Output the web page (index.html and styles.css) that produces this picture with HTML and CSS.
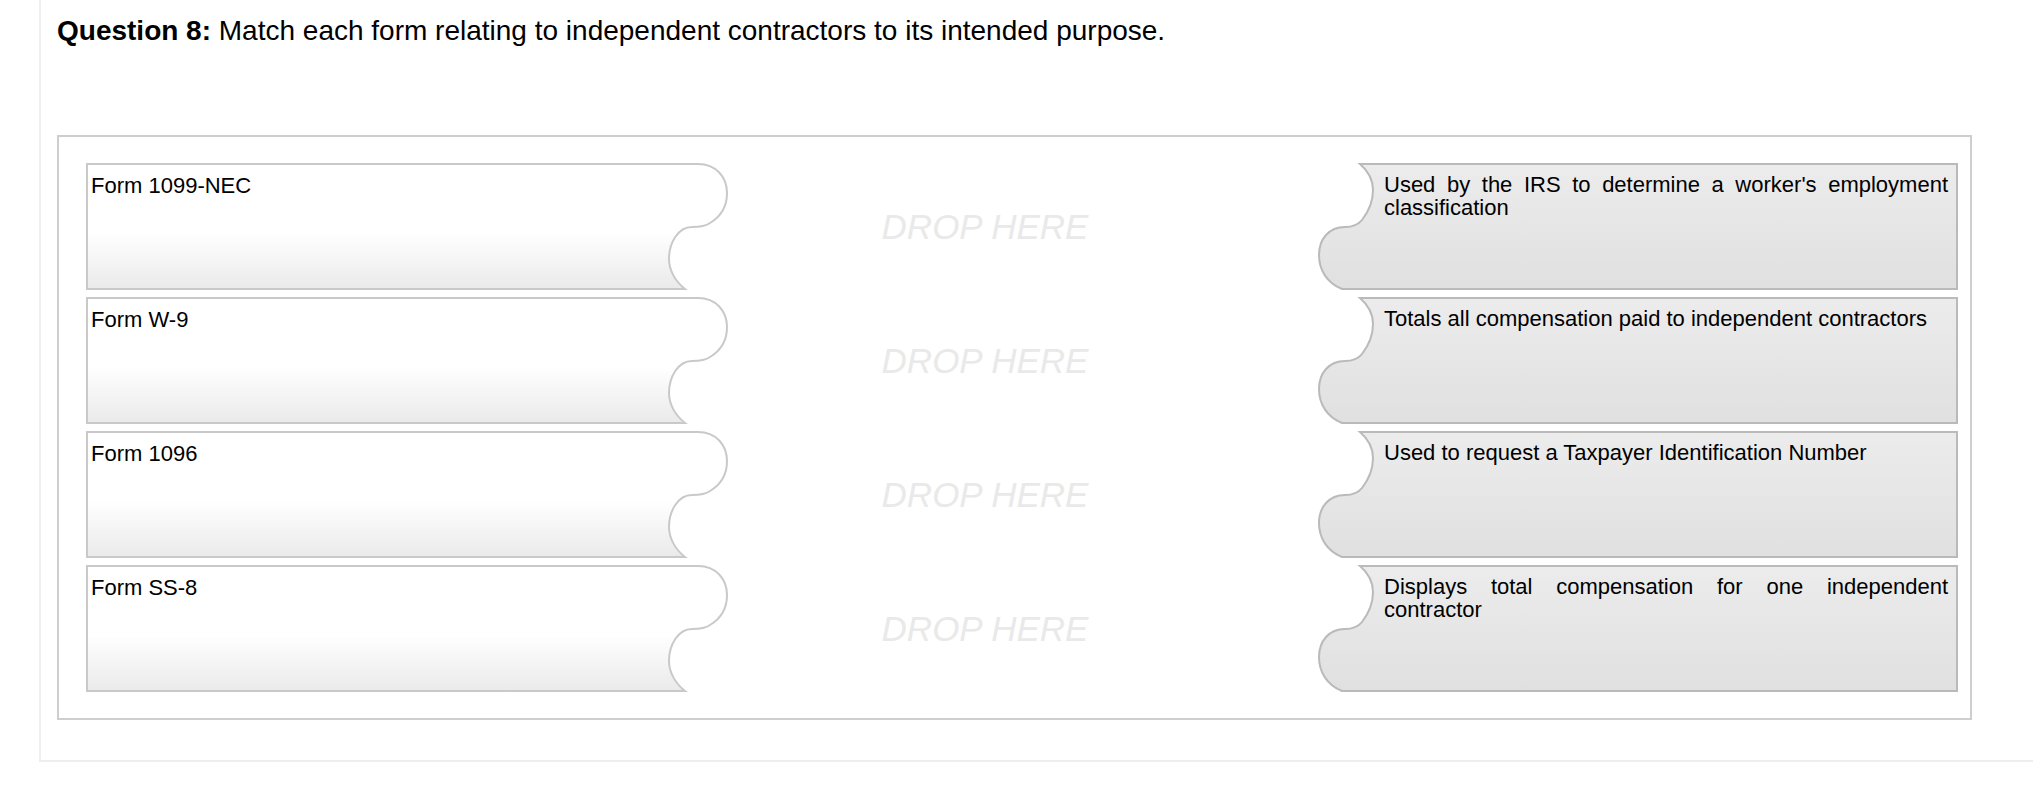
FILE: index.html
```html
<!DOCTYPE html>
<html>
  <head>
    <title>Question 8</title>
    <link rel="stylesheet" href="styles.css">
  </head>
  <body>
    <div class="page">
      <div class="question"><b>Question 8:</b> Match each form relating to independent contractors to its intended purpose.</div>

      <div class="match-panel">
        <div class="match-row">
          <div class="card card-left">
            <svg class="card-shape" width="642" height="128" viewBox="0 0 642 128">
              <defs>
                <linearGradient id="lg1" x1="0" y1="0" x2="0" y2="1">
                  <stop offset="0" stop-color="#fff"/>
                  <stop offset="0.55" stop-color="#fff"/>
                  <stop offset="1" stop-color="#eaeaea"/>
                </linearGradient>
              </defs>
              <path d="M1,1 H612 C630,1 641,14 641,30 C641,44 634,54 624,60 C620,63 614,64 606,64 C592,64 583,80 583,96 C583,108 590,119 599,126 H1 Z" fill="url(#lg1)" stroke="#c9c9c9" stroke-width="2"/>
            </svg>
            <div class="card-text">Form 1099-NEC</div>
          </div>
          <div class="drop-zone">DROP HERE</div>
          <div class="card card-right">
            <svg class="card-shape" width="642" height="128" viewBox="0 0 642 128">
              <defs>
                <linearGradient id="rg1" x1="0" y1="0" x2="0" y2="1">
                  <stop offset="0" stop-color="#ececec"/>
                  <stop offset="1" stop-color="#e0e0e0"/>
                </linearGradient>
              </defs>
              <path d="M43,1 H640 V126 H25 C10,120 2,107 2,92 C2,76 12,64 28,64 C36,64 41,62 45,57 C52,48 56,38 56,27 C56,16 50,7 43,1 Z" fill="url(#rg1)" stroke="#bababa" stroke-width="2"/>
            </svg>
            <div class="card-text">Used by the IRS to determine a worker's employment classification</div>
          </div>
        </div>

        <div class="match-row">
          <div class="card card-left">
            <svg class="card-shape" width="642" height="128" viewBox="0 0 642 128">
              <defs>
                <linearGradient id="lg2" x1="0" y1="0" x2="0" y2="1">
                  <stop offset="0" stop-color="#fff"/>
                  <stop offset="0.55" stop-color="#fff"/>
                  <stop offset="1" stop-color="#eaeaea"/>
                </linearGradient>
              </defs>
              <path d="M1,1 H612 C630,1 641,14 641,30 C641,44 634,54 624,60 C620,63 614,64 606,64 C592,64 583,80 583,96 C583,108 590,119 599,126 H1 Z" fill="url(#lg2)" stroke="#c9c9c9" stroke-width="2"/>
            </svg>
            <div class="card-text">Form W-9</div>
          </div>
          <div class="drop-zone">DROP HERE</div>
          <div class="card card-right">
            <svg class="card-shape" width="642" height="128" viewBox="0 0 642 128">
              <defs>
                <linearGradient id="rg2" x1="0" y1="0" x2="0" y2="1">
                  <stop offset="0" stop-color="#ececec"/>
                  <stop offset="1" stop-color="#e0e0e0"/>
                </linearGradient>
              </defs>
              <path d="M43,1 H640 V126 H25 C10,120 2,107 2,92 C2,76 12,64 28,64 C36,64 41,62 45,57 C52,48 56,38 56,27 C56,16 50,7 43,1 Z" fill="url(#rg2)" stroke="#bababa" stroke-width="2"/>
            </svg>
            <div class="card-text">Totals all compensation paid to independent contractors</div>
          </div>
        </div>

        <div class="match-row">
          <div class="card card-left">
            <svg class="card-shape" width="642" height="128" viewBox="0 0 642 128">
              <defs>
                <linearGradient id="lg3" x1="0" y1="0" x2="0" y2="1">
                  <stop offset="0" stop-color="#fff"/>
                  <stop offset="0.55" stop-color="#fff"/>
                  <stop offset="1" stop-color="#eaeaea"/>
                </linearGradient>
              </defs>
              <path d="M1,1 H612 C630,1 641,14 641,30 C641,44 634,54 624,60 C620,63 614,64 606,64 C592,64 583,80 583,96 C583,108 590,119 599,126 H1 Z" fill="url(#lg3)" stroke="#c9c9c9" stroke-width="2"/>
            </svg>
            <div class="card-text">Form 1096</div>
          </div>
          <div class="drop-zone">DROP HERE</div>
          <div class="card card-right">
            <svg class="card-shape" width="642" height="128" viewBox="0 0 642 128">
              <defs>
                <linearGradient id="rg3" x1="0" y1="0" x2="0" y2="1">
                  <stop offset="0" stop-color="#ececec"/>
                  <stop offset="1" stop-color="#e0e0e0"/>
                </linearGradient>
              </defs>
              <path d="M43,1 H640 V126 H25 C10,120 2,107 2,92 C2,76 12,64 28,64 C36,64 41,62 45,57 C52,48 56,38 56,27 C56,16 50,7 43,1 Z" fill="url(#rg3)" stroke="#bababa" stroke-width="2"/>
            </svg>
            <div class="card-text">Used to request a Taxpayer Identification Number</div>
          </div>
        </div>

        <div class="match-row">
          <div class="card card-left">
            <svg class="card-shape" width="642" height="128" viewBox="0 0 642 128">
              <defs>
                <linearGradient id="lg4" x1="0" y1="0" x2="0" y2="1">
                  <stop offset="0" stop-color="#fff"/>
                  <stop offset="0.55" stop-color="#fff"/>
                  <stop offset="1" stop-color="#eaeaea"/>
                </linearGradient>
              </defs>
              <path d="M1,1 H612 C630,1 641,14 641,30 C641,44 634,54 624,60 C620,63 614,64 606,64 C592,64 583,80 583,96 C583,108 590,119 599,126 H1 Z" fill="url(#lg4)" stroke="#c9c9c9" stroke-width="2"/>
            </svg>
            <div class="card-text">Form SS-8</div>
          </div>
          <div class="drop-zone">DROP HERE</div>
          <div class="card card-right">
            <svg class="card-shape" width="642" height="128" viewBox="0 0 642 128">
              <defs>
                <linearGradient id="rg4" x1="0" y1="0" x2="0" y2="1">
                  <stop offset="0" stop-color="#ececec"/>
                  <stop offset="1" stop-color="#e0e0e0"/>
                </linearGradient>
              </defs>
              <path d="M43,1 H640 V126 H25 C10,120 2,107 2,92 C2,76 12,64 28,64 C36,64 41,62 45,57 C52,48 56,38 56,27 C56,16 50,7 43,1 Z" fill="url(#rg4)" stroke="#bababa" stroke-width="2"/>
            </svg>
            <div class="card-text">Displays total compensation for one independent contractor</div>
          </div>
        </div>
      </div>
    </div>
  </body>
</html>
```

FILE: styles.css
```css
body {
  background: #fff;
  color: #000;
  font-family: 'Liberation Sans', Arial, sans-serif;
  margin: 0;
}

.page {
  border-bottom: 2px solid #eee;
  border-left: 2px solid #eee;
  margin-left: 39px;
  padding: 15px 0 40px 16px;
}

.question {
  font-size: 28px;
  line-height: 32px;
}

.match-panel {
  border: 2px solid #cecece;
  box-sizing: border-box;
  display: flex;
  flex-direction: column;
  gap: 6px;
  margin-top: 88px;
  padding: 26px 11px 25px 27px;
  width: 1915px;
}

.match-row {
  display: grid;
  grid-template-columns: 642px 1fr 642px;
  height: 128px;
}

.card {
  font-size: 22px;
  height: 128px;
  position: relative;
}

.card-shape {
  display: block;
  left: 0;
  position: absolute;
  top: 0;
}

.card-text {
  position: relative;
}

.card-left .card-text {
  line-height: 22px;
  padding: 12px 0 0 5px;
}

.card-right .card-text {
  line-height: 23px;
  padding: 10px 11px 0 67px;
  text-align: justify;
}

.drop-zone {
  align-items: center;
  color: #e9e9e9;
  display: flex;
  font-size: 35px;
  font-style: italic;
  justify-content: center;
  line-height: 40px;
  padding-right: 75px;
}
```
